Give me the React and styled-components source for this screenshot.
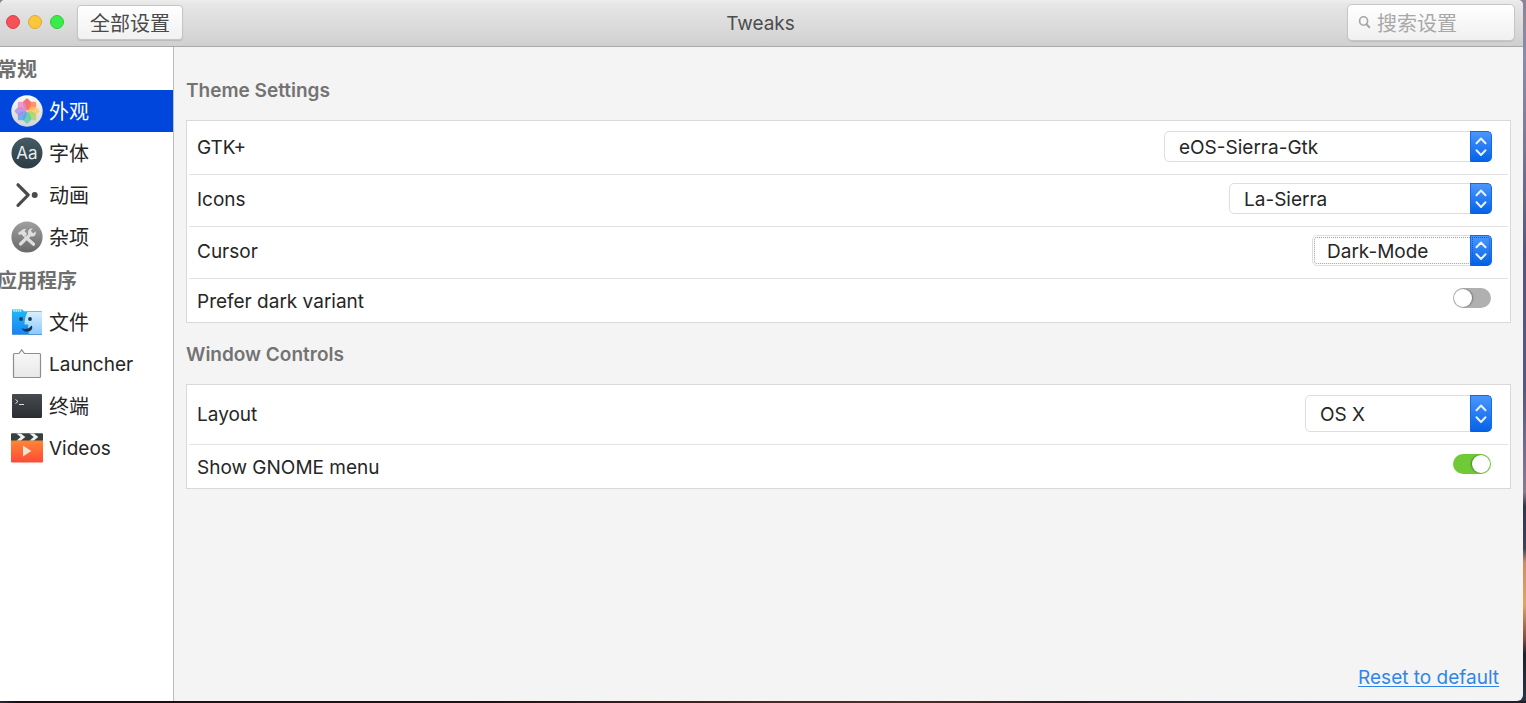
import React, { useState } from "react";
import styled, { createGlobalStyle } from "styled-components";

const latin = `Inter, "Noto Sans CJK SC", sans-serif`;

const GlobalStyle = createGlobalStyle`
  *, *::before, *::after { box-sizing: border-box; }
  body { margin: 0; font-family: ${latin}; font-size: 19px; line-height: 24px; color: #262626; }
  button, input, select { font: inherit; color: inherit; }
`;

const Desktop = styled.div`
  min-height: 100vh;
  display: flex;
  padding: 0 3px 2px 0;
  background:
    linear-gradient(90deg, #2b2b3a, #1c1013 1%, #1c1013 30%, #4a2a26 52%, #4d2d25 60%, #2a1a22 70%, #232332 88%, #1d2029) bottom / 100% 2px no-repeat,
    linear-gradient(180deg, #8d8298 0, #8a8da6 8%, #7f8097 18%, #54567d 36%, #55587f 55%, #8a7b93 70%, #33364a 72%, #3c4358 78%, #d08b62 80%, #e0a565 86%, #7c4a44 91%, #1e222d 93%, #2b3547 100%);
`;

const Window = styled.div`
  flex: 1;
  min-width: 0;
  display: flex;
  flex-direction: column;
  overflow: hidden;
  border-radius: 5px 5px 6px 0;
  background: #f4f4f4;
`;

const HeaderBar = styled.header`
  display: grid;
  grid-template-columns: 1fr auto 1fr;
  align-items: center;
  height: 47px;
  padding: 0 8px 2px 6px;
  border-bottom: 1px solid #a9a9a9;
  background: linear-gradient(#ededed, #e6e6e6 10%, #d0d0d0);
`;

const HeaderStart = styled.div`
  display: flex;
  align-items: center;
  gap: 13px;
`;

const WindowButtons = styled.div`
  display: flex;
  gap: 8px;
`;

const Dot = styled.button`
  width: 14px;
  height: 14px;
  padding: 0;
  border: 1px solid ${(p) => p.$edge};
  border-radius: 50%;
  background: ${(p) => p.$fill};
`;

const AllSettings = styled.button`
  height: 35px;
  padding: 3px 12px 0;
  border: 1px solid #c6c6c6;
  border-radius: 4px;
  background: linear-gradient(#ffffff, #f1f1f1);
  box-shadow: 0 1px 1px rgba(0, 0, 0, 0.12);
  color: #4a4a4a;
  font-size: 20px;
  line-height: 24px;
`;

const Title = styled.h1`
  margin: 0;
  padding-top: 3px;
  font-size: 19px;
  font-weight: 400;
  color: #4d4d4d;
`;

const SearchBox = styled.label`
  justify-self: end;
  display: flex;
  align-items: center;
  gap: 6px;
  width: 168px;
  height: 37px;
  padding: 0 10px;
  border: 1px solid #c6c6c6;
  border-radius: 5px;
  background: linear-gradient(#ffffff, #f0f0f0);
  box-shadow: 0 1px 1px rgba(0, 0, 0, 0.1);
`;

const SearchInput = styled.input`
  flex: 1;
  min-width: 0;
  padding: 3px 0 0;
  border: 0;
  outline: 0;
  background: none;
  font-size: 20px;
  &::placeholder { color: #a8a8a8; opacity: 1; }
`;

const Body = styled.div`
  flex: 1;
  display: flex;
`;

const Sidebar = styled.nav`
  flex: none;
  width: 174px;
  overflow: hidden;
  border-right: 1px solid #bdbdbd;
  background: #fff;
`;

const GroupTitle = styled.h2`
  margin: 0 0 0 -3px;
  height: 43px;
  font-size: 20px;
  font-weight: 700;
  line-height: 46px;
  color: #6f6f6f;
`;

const NavItem = styled.button`
  display: flex;
  align-items: center;
  gap: 6px;
  width: 100%;
  height: 42px;
  padding: 0 0 0 11px;
  border: 0;
  text-align: left;
  font-size: ${(p) => (p.$cjk ? 20 : 19)}px;
  background: ${(p) => (p.$active ? "#0046dc" : "transparent")};
  color: ${(p) => (p.$active ? "#fff" : "#262626")};
  svg { flex: none; display: block; }
`;

const NavLabel = styled.span`
  padding-top: 2px;
`;

const Content = styled.main`
  flex: 1;
  min-width: 0;
  display: flex;
  flex-direction: column;
  padding: 32px 12px 11px;
`;

const Section = styled.section`
  margin-bottom: 20px;
`;

const SectionTitle = styled.h2`
  margin: 0 0 17px;
  font-size: 19px;
  font-weight: 600;
  line-height: 24px;
  color: #737373;
`;

const Panel = styled.div`
  padding: 2px 2px 0;
  border: 1px solid #d9d9d9;
  background: #fff;
`;

const Row = styled.div`
  display: flex;
  align-items: center;
  justify-content: space-between;
  padding: 8px 16px 12px 8px;
  & + & { border-top: 1px solid #e2e2e2; }
`;

const ToggleRow = styled(Row)`
  align-items: flex-start;
  padding: 9px 17px 8px 8px;
`;

const RowLabel = styled.label`
  padding-top: 2px;
`;

const Picker = styled.div`
  display: grid;
  grid-template-columns: 1fr 22px;
  width: ${(p) => p.$width}px;
  height: ${(p) => p.$height}px;
`;

const PickerSelect = styled.select`
  grid-area: 1 / 1 / 2 / 3;
  appearance: none;
  height: 100%;
  padding: 2px 24px 0 14px;
  border: 1px solid #dedede;
  border-radius: 5px;
  outline: ${(p) => (p.$focused ? "1px dotted #a0a0a0" : "0")};
  outline-offset: -3px;
  background: #fff;
`;

const Stepper = styled.span`
  grid-area: 1 / 2 / 2 / 3;
  display: grid;
  place-items: center;
  pointer-events: none;
  border: 1px solid #1269f0;
  border-bottom-color: #0560e0;
  border-radius: 0 5px 5px 0;
  background: linear-gradient(#4a96fd, #0563e6);
  outline: ${(p) => (p.$focused ? "1px dotted #2058b0" : "0")};
  outline-offset: -3px;
`;

const Switch = styled.input`
  appearance: none;
  display: flex;
  width: 38px;
  height: 20px;
  margin: 0;
  padding: 1px;
  border-radius: 10px;
  background: #b0b0b0;
  &::before {
    content: "";
    width: 18px;
    height: 18px;
    border-radius: 50%;
    background: #fff;
    box-shadow: 1px 0 2px rgba(0, 0, 0, 0.35);
  }
  &:checked { justify-content: flex-end; background: #70c937; }
  &:checked::before { box-shadow: -1px 0 2px rgba(0, 0, 0, 0.35); }
`;

const Footer = styled.footer`
  display: flex;
  justify-content: flex-end;
  margin-top: auto;
  padding-right: 12px;
`;

const ResetLink = styled.a`
  color: #2f86e8;
  text-decoration: underline;
  text-decoration-thickness: 1px;
  text-underline-offset: 2px;
`;

const petals = ["#f04e55", "#ff7b4a", "#fdc957", "#a5d468", "#52cfa5", "#5a9df0", "#a78bea", "#e884c4"];

const PhotosIcon = () => (
  <svg width="32" height="32" viewBox="0 0 32 32" aria-hidden="true">
    <defs>
      <linearGradient id="photo" x2="0" y2="1"><stop stopColor="#fafafa" /><stop offset="1" stopColor="#d4d4d4" /></linearGradient>
    </defs>
    <circle cx="16" cy="16" r="15.7" fill="url(#photo)" />
    {petals.map((c, i) => (
      <path key={c} d="M16 15.4C12.4 12.6 11 9 12.4 6.6Q14 4.8 16 3.3Q18 4.8 19.6 6.6C21 9 19.6 12.6 16 15.4Z" fill={c} opacity=".78" transform={`rotate(${i * 45} 16 16)`} />
    ))}
  </svg>
);

const FontsIcon = () => (
  <svg width="32" height="32" viewBox="0 0 32 32" aria-hidden="true">
    <defs>
      <linearGradient id="fonts" x2="0" y2="1"><stop stopColor="#455b65" /><stop offset="1" stopColor="#2b3c45" /></linearGradient>
    </defs>
    <circle cx="16" cy="16" r="15.5" fill="url(#fonts)" />
    <text x="16" y="22" textAnchor="middle" fontFamily="Inter, sans-serif" fontSize="17" fill="#e8eaeb">Aa</text>
  </svg>
);

const AnimationIcon = () => (
  <svg width="32" height="32" viewBox="0 0 32 32" aria-hidden="true">
    <path d="M7 5.8L17.2 16L7 26.4" fill="none" stroke="#4b4b4b" strokeWidth="3.2" strokeLinecap="round" strokeLinejoin="round" />
    <circle cx="23.7" cy="16" r="3" fill="#4b4b4b" />
  </svg>
);

const ToolsIcon = () => (
  <svg width="32" height="32" viewBox="0 0 32 32" aria-hidden="true">
    <defs>
      <linearGradient id="tools" x2="0" y2="1"><stop stopColor="#a0a0a0" /><stop offset="1" stopColor="#686868" /></linearGradient>
    </defs>
    <circle cx="16" cy="16" r="15.6" fill="url(#tools)" />
    <path d="M9.5 23L20 12.8" stroke="#dedede" strokeWidth="3.2" strokeLinecap="round" />
    <path d="M21.8 7.7L19.7 9.8L22.4 12.5L24.6 10.3C25.4 12.4 24.6 14.1 23.3 15C21.6 16 19.5 15.7 18.1 14.3C16.7 12.7 16.5 10.8 17.5 9.2C18.4 7.9 20 7.2 21.8 7.7Z" fill="#dedede" />
    <path d="M14.8 16.2L22.6 23.2" stroke="#dedede" strokeWidth="3.2" strokeLinecap="round" />
    <path d="M7 12.3L9 10.3L9.6 10.6C10.2 9.5 11.3 7.9 14.5 7.7L15.2 8.5C13.8 8.9 13.6 9.8 13.9 10.5L16.2 13L12.8 16.1L10.7 13.5L9.5 13.2L8.6 14.2Z" fill="#dedede" />
  </svg>
);

const FilesIcon = () => (
  <svg width="32" height="32" viewBox="0 0 32 32" aria-hidden="true">
    <defs>
      <linearGradient id="fl" x2="0" y2="1"><stop stopColor="#22b8f8" /><stop offset="1" stopColor="#1684f3" /></linearGradient>
      <linearGradient id="fr" x2="0" y2="1"><stop stopColor="#d7effe" /><stop offset="1" stopColor="#8ac8fb" /></linearGradient>
    </defs>
    <path d="M1 4.5Q1 3.3 2 3.3H11L13 5.3H30Q31 5.3 31 6.5V27.5Q31 28.6 30 28.6H2Q1 28.6 1 27.5Z" fill="url(#fl)" />
    <path d="M16.5 6H30Q31 6 31 7V27.5Q31 28.6 30 28.6H18.2C17 25 17 21.5 17.2 18.4H13.5C13.5 14 14.5 10 16.5 6Z" fill="url(#fr)" />
    <path d="M2.2 4.5H10.4" stroke="#bdecff" strokeWidth="2.4" strokeDasharray="1.6 .6" />
    <path d="M1 28.5H31" stroke="#4d91ca" strokeWidth=".8" />
    <ellipse cx="10" cy="13" rx="1.9" ry="2.1" fill="#113b58" />
    <ellipse cx="19" cy="13" rx="1.9" ry="2.1" fill="#113b58" />
    <path d="M10.8 22.3C14 23.5 18.2 23.1 20.5 19.4C22.2 21.6 21 24.6 17.6 25.5C14.7 26.1 11.7 25.1 10.8 22.3Z" fill="#12364d" />
  </svg>
);

const LauncherIcon = () => (
  <svg width="32" height="32" viewBox="0 0 32 32" aria-hidden="true">
    <defs>
      <linearGradient id="launch" x2="0" y2="1"><stop stopColor="#fafafa" /><stop offset="1" stopColor="#e8e8e8" /></linearGradient>
    </defs>
    <path d="M3.5 5.5H8L10.7 1.8L13.4 5.5H28.5Q29.5 5.5 29.5 6.5V28.5Q29.5 29.5 28.5 29.5H3.5Q2.5 29.5 2.5 28.5V6.5Q2.5 5.5 3.5 5.5Z" fill="url(#launch)" stroke="#8e8e8e" strokeWidth="1.2" />
  </svg>
);

const TerminalIcon = () => (
  <svg width="32" height="32" viewBox="0 0 32 32" aria-hidden="true">
    <defs>
      <linearGradient id="term" x2="0" y2="1"><stop stopColor="#474b4f" /><stop offset="1" stopColor="#2b2e32" /></linearGradient>
    </defs>
    <rect x="1" y="4" width="30" height="23.6" rx="1" fill="url(#term)" />
    <path d="M1.5 27.4H30.5" stroke="#202225" />
    <path d="M4.5 9.5L7 11.5L4.5 13.5M8 14.5H13" fill="none" stroke="#ddd" />
  </svg>
);

const VideosIcon = () => (
  <svg width="32" height="32" viewBox="0 0 32 32" aria-hidden="true">
    <defs>
      <linearGradient id="vid" x2="0" y2="1"><stop stopColor="#ff8a35" /><stop offset="1" stopColor="#ff4a35" /></linearGradient>
    </defs>
    <path d="M0 7H32V29.5Q32 30.5 31 30.5H1Q0 30.5 0 29.5Z" fill="url(#vid)" />
    <path d="M1 1.3H31Q32 1.3 32 2.3V8.6H0V2.3Q0 1.3 1 1.3Z" fill="#35413f" />
    <path d="M5.2 1.5H9.8L14.3 5L10 8.6H5.7L9.7 5ZM18.4 1.5H23L27.3 5L23 8.6H18.7L22.7 5Z" fill="#f1f1ef" />
    <path d="M12 13.5L20.3 19L12 24.5Z" fill="#ece4d2" />
  </svg>
);

const SearchIcon = () => (
  <svg width="13" height="13" viewBox="0 0 13 13" fill="none" stroke="#a5a5a5" strokeLinecap="round" aria-hidden="true">
    <ellipse cx="5.6" cy="5" rx="4" ry="4.2" strokeWidth="1.6" />
    <path d="M8.5 8.3L11.3 11.2" strokeWidth="2" />
  </svg>
);

const Chevrons = () => (
  <svg width="12" height="20" viewBox="0 0 12 20" fill="none" stroke="#e6f1ff" strokeWidth="2" strokeLinecap="round" strokeLinejoin="round" aria-hidden="true">
    <path d="M1.5 6.2L6 1.5L10.5 6.2M1.5 13.2L6 18L10.5 13.2" />
  </svg>
);

const groups = [
  {
    title: "常规",
    items: [
      { name: "外观", icon: PhotosIcon, cjk: true },
      { name: "字体", icon: FontsIcon, cjk: true },
      { name: "动画", icon: AnimationIcon, cjk: true },
      { name: "杂项", icon: ToolsIcon, cjk: true },
    ],
  },
  {
    title: "应用程序",
    items: [
      { name: "文件", icon: FilesIcon, cjk: true },
      { name: "Launcher", icon: LauncherIcon },
      { name: "终端", icon: TerminalIcon, cjk: true },
      { name: "Videos", icon: VideosIcon },
    ],
  },
];

function SelectRow({ id, label, value, width, height = 31, focused }) {
  return (
    <Row>
      <RowLabel htmlFor={id}>{label}</RowLabel>
      <Picker $width={width} $height={height}>
        <PickerSelect id={id} defaultValue={value} $focused={focused}>
          <option>{value}</option>
        </PickerSelect>
        <Stepper $focused={focused}><Chevrons /></Stepper>
      </Picker>
    </Row>
  );
}

function SwitchRow({ id, label, on }) {
  return (
    <ToggleRow>
      <RowLabel htmlFor={id}>{label}</RowLabel>
      <Switch id={id} type="checkbox" role="switch" defaultChecked={on} />
    </ToggleRow>
  );
}

export default function App() {
  const [active, setActive] = useState("外观");
  return (
    <>
      <GlobalStyle />
      <Desktop>
        <Window>
          <HeaderBar>
            <HeaderStart>
              <WindowButtons>
                <Dot aria-label="Close" $fill="#f65158" $edge="#dd4249" />
                <Dot aria-label="Minimize" $fill="#fcc63a" $edge="#e0a833" />
                <Dot aria-label="Maximize" $fill="#3aec4b" $edge="#2ecb3d" />
              </WindowButtons>
              <AllSettings>全部设置</AllSettings>
            </HeaderStart>
            <Title>Tweaks</Title>
            <SearchBox>
              <SearchIcon />
              <SearchInput type="text" placeholder="搜索设置" aria-label="搜索设置" />
            </SearchBox>
          </HeaderBar>
          <Body>
            <Sidebar>
              {groups.map((g) => (
                <React.Fragment key={g.title}>
                  <GroupTitle>{g.title}</GroupTitle>
                  {g.items.map(({ name, icon: Icon, cjk }) => (
                    <NavItem key={name} $cjk={cjk} $active={active === name} onClick={() => setActive(name)}>
                      <Icon />
                      <NavLabel>{name}</NavLabel>
                    </NavItem>
                  ))}
                </React.Fragment>
              ))}
            </Sidebar>
            <Content>
              <Section>
                <SectionTitle>Theme Settings</SectionTitle>
                <Panel>
                  <SelectRow id="gtk" label="GTK+" value="eOS-Sierra-Gtk" width={328} />
                  <SelectRow id="icons" label="Icons" value="La-Sierra" width={263} />
                  <SelectRow id="cursor" label="Cursor" value="Dark-Mode" width={180} focused />
                  <SwitchRow id="dark" label="Prefer dark variant" />
                </Panel>
              </Section>
              <Section>
                <SectionTitle>Window Controls</SectionTitle>
                <Panel>
                  <SelectRow id="layout" label="Layout" value="OS X" width={187} height={37} />
                  <SwitchRow id="gnome" label="Show GNOME menu" on />
                </Panel>
              </Section>
              <Footer>
                <ResetLink href="#reset">Reset to default</ResetLink>
              </Footer>
            </Content>
          </Body>
        </Window>
      </Desktop>
    </>
  );
}
